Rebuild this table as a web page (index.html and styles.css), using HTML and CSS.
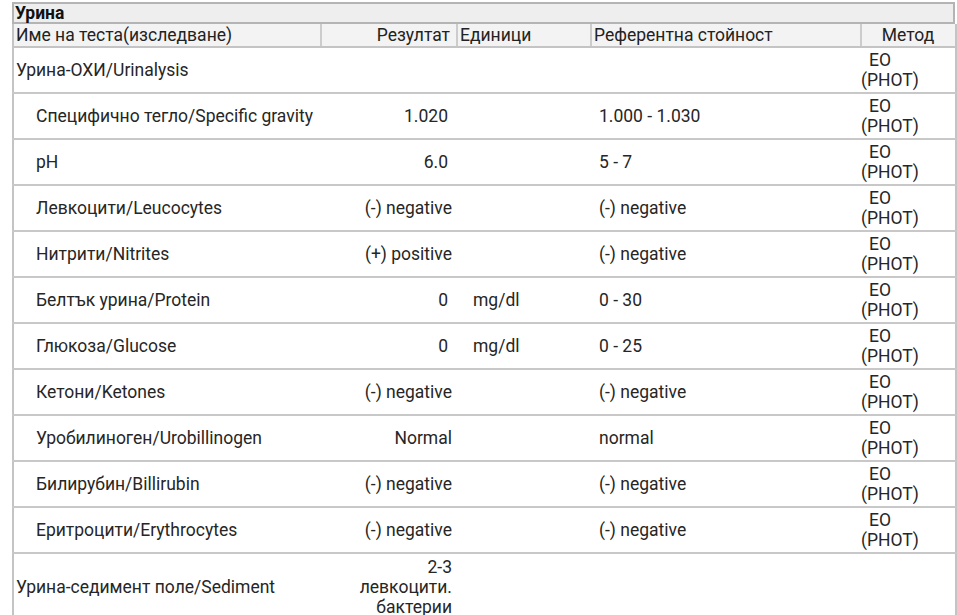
FILE: index.html
```html
<!DOCTYPE html>
<html lang="bg">
<head>
<meta charset="utf-8">
<link rel="stylesheet" href="styles.css">
</head>
<body>
<div class="sheet">
  <div class="section-title">Урина</div>
  <table class="results">
    <colgroup>
      <col class="c-name"><col class="c-res"><col class="c-unit"><col class="c-ref"><col class="c-meth">
    </colgroup>
    <thead>
      <tr>
        <th class="h-name">Име на теста(изследване)</th>
        <th class="h-res">Резултат</th>
        <th class="h-unit">Единици</th>
        <th class="h-ref">Референтна стойност</th>
        <th class="h-meth">Метод</th>
      </tr>
    </thead>
    <tbody>
      <tr>
        <td class="name">Урина-ОХИ/Urinalysis</td>
        <td class="res"></td><td class="unit"></td><td class="ref"></td>
        <td class="meth"><span class="eo">EO</span><br>(PHOT)</td>
      </tr>
      <tr>
        <td class="name sub">Специфично тегло/Specific gravity</td>
        <td class="res num">1.020</td><td class="unit"></td><td class="ref">1.000 - 1.030</td>
        <td class="meth"><span class="eo">EO</span><br>(PHOT)</td>
      </tr>
      <tr>
        <td class="name sub">pH</td>
        <td class="res num">6.0</td><td class="unit"></td><td class="ref">5 - 7</td>
        <td class="meth"><span class="eo">EO</span><br>(PHOT)</td>
      </tr>
      <tr>
        <td class="name sub">Левкоцити/Leucocytes</td>
        <td class="res">(-) negative</td><td class="unit"></td><td class="ref">(-) negative</td>
        <td class="meth"><span class="eo">EO</span><br>(PHOT)</td>
      </tr>
      <tr>
        <td class="name sub">Нитрити/Nitrites</td>
        <td class="res">(+) positive</td><td class="unit"></td><td class="ref">(-) negative</td>
        <td class="meth"><span class="eo">EO</span><br>(PHOT)</td>
      </tr>
      <tr>
        <td class="name sub">Белтък урина/Protein</td>
        <td class="res num">0</td><td class="unit">mg/dl</td><td class="ref">0 - 30</td>
        <td class="meth"><span class="eo">EO</span><br>(PHOT)</td>
      </tr>
      <tr>
        <td class="name sub">Глюкоза/Glucose</td>
        <td class="res num">0</td><td class="unit">mg/dl</td><td class="ref">0 - 25</td>
        <td class="meth"><span class="eo">EO</span><br>(PHOT)</td>
      </tr>
      <tr>
        <td class="name sub">Кетони/Ketones</td>
        <td class="res">(-) negative</td><td class="unit"></td><td class="ref">(-) negative</td>
        <td class="meth"><span class="eo">EO</span><br>(PHOT)</td>
      </tr>
      <tr>
        <td class="name sub">Уробилиноген/Urobillinogen</td>
        <td class="res">Normal</td><td class="unit"></td><td class="ref">normal</td>
        <td class="meth"><span class="eo">EO</span><br>(PHOT)</td>
      </tr>
      <tr>
        <td class="name sub">Билирубин/Billirubin</td>
        <td class="res">(-) negative</td><td class="unit"></td><td class="ref">(-) negative</td>
        <td class="meth"><span class="eo">EO</span><br>(PHOT)</td>
      </tr>
      <tr>
        <td class="name sub">Еритроцити/Erythrocytes</td>
        <td class="res">(-) negative</td><td class="unit"></td><td class="ref">(-) negative</td>
        <td class="meth"><span class="eo">EO</span><br>(PHOT)</td>
      </tr>
      <tr class="last">
        <td class="name">Урина-седимент поле/Sediment</td>
        <td class="res">2-3<br>левкоцити.<br>бактерии</td><td class="unit"></td><td class="ref"></td>
        <td class="meth"></td>
      </tr>
    </tbody>
  </table>
</div>
</body>
</html>
```

FILE: styles.css
```css
html, body {
  margin: 0;
  padding: 0;
  background: #ffffff;
}

body {
  font-family: Roboto, "Noto Sans", "DejaVu Sans", sans-serif;
  font-size: 17.5px;
  line-height: 20px;
  color: #262626;
}

.sheet {
  margin: 2px 2px 0 12px;
  width: 943px;
}

.section-title {
  background: #eeeeee;
  border: 2px solid #b4b4b4;
  padding: 0 0 0 1px;
  font-weight: bold;
  line-height: 18px;
  color: #111111;
}

.results {
  width: 943px;
  border-collapse: collapse;
  table-layout: fixed;
  border-left: 2px solid #c4c4c4;
  border-right: 2px solid #c4c4c4;
}

.c-name { width: 308px; }
.c-res { width: 136px; }
.c-unit { width: 134px; }
.c-ref { width: 270px; }
.c-meth { width: 95px; }

thead th {
  background: #f3f3f3;
  font-weight: normal;
  padding: 1px 3px 1px 2px;
  border-left: 2px solid #cccccc;
  border-bottom: 2px solid #c4c4c4;
  text-align: left;
  white-space: nowrap;
  color: #222222;
}

thead th:first-child { border-left: none; }

.h-res { text-align: right; padding-right: 6px; }
.h-meth { text-align: center; }

tbody td {
  padding: 2px 0;
  height: 40px;
  border-bottom: 2px solid #c8c8c8;
  vertical-align: middle;
}

.name { padding-left: 2px; }
.name.sub { padding-left: 22px; }

.res {
  text-align: right;
  padding-right: 5px;
}

.res.num { padding-right: 9px; }

.unit { padding-left: 16px; }

.ref { padding-left: 8px; }

.meth {
  padding-left: 0;
  white-space: nowrap;
}

.eo { padding-left: 8px; }

tr.last td {
  border-bottom: none;
  padding-top: 3px;
}
```
